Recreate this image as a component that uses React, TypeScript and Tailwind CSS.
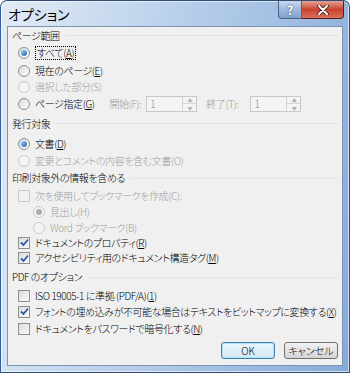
import type { ReactNode } from 'react'

const FONT = "font-['Noto_Sans_CJK_JP','Noto_Sans',sans-serif] [font-feature-settings:'palt']"

// Windows 7 style option dialog (Word "PDF options")
function Key({ k }: { k: string }) {
  return <>(<span className="underline underline-offset-1">{k}</span>)</>
}

function Radio({ checked, disabled }: { checked?: boolean; disabled?: boolean }) {
  return (
    <span
      className={`relative flex h-[12px] w-[12px] shrink-0 items-center justify-center rounded-full border ${
        disabled ? 'border-[#c9cbcc] bg-[#f4f4f4]' : 'border-[#8b9095] bg-gradient-to-br from-[#d6d9dc] to-[#ffffff]'
      }`}
    >
      {checked && (
        <span
          className={`h-[6px] w-[6px] rounded-full ${
            disabled ? 'bg-[#a9aeb3]' : 'bg-gradient-to-br from-[#9fd0f7] to-[#1a5fb4]'
          }`}
        />
      )}
    </span>
  )
}

function Check({ checked, disabled }: { checked?: boolean; disabled?: boolean }) {
  return (
    <span
      className={`flex h-[12px] w-[12px] shrink-0 items-center justify-center border ${
        disabled ? 'border-[#cbcbcb] bg-[#f2f2f2]' : 'border-[#8e8f8f] bg-gradient-to-br from-[#dcdcdc] to-[#fafafa]'
      }`}
    >
      {checked && (
        <svg width="9" height="9" viewBox="0 0 9 9">
          <path d="M1 4.5 L3.5 7 L8 1.5" fill="none" stroke="#2c5aa9" strokeWidth="1.8" />
        </svg>
      )}
    </span>
  )
}

function Header({ children, h }: { children: ReactNode; h: string }) {
  return (
    <div className={`flex items-center pl-[4px] pr-[3px] ${h}`}>
      <span className="whitespace-nowrap text-black">{children}</span>
      <span className="ml-[6px] h-px flex-1 bg-[#dde3e9]" />
    </div>
  )
}

function Row({
  children,
  h,
  indent = 'pl-[10px]',
  disabled,
}: {
  children: ReactNode
  h: string
  indent?: string
  disabled?: boolean
}) {
  return (
    <div
      className={`flex items-center gap-[5px] whitespace-nowrap ${h} ${indent} ${
        disabled ? 'text-[#a0a0a0]' : 'text-black'
      }`}
    >
      {children}
    </div>
  )
}

function Spin({ ml }: { ml: string }) {
  return (
    <div className={`flex h-[16px] w-[51px] shrink-0 items-center border border-[#c6c8ca] bg-[#f4f4f4] text-[#8a8a8a] ${ml}`}>
      <span className="flex-1 pl-[3px] leading-none">1</span>
      <div className="flex h-full w-[14px] flex-col border-l border-[#d4d4d4]">
        <span className="flex flex-1 items-center justify-center text-[5px] leading-none text-[#b0b0b0]">▲</span>
        <span className="flex flex-1 items-center justify-center border-t border-[#d4d4d4] text-[5px] leading-none text-[#b0b0b0]">▼</span>
      </div>
    </div>
  )
}

export default function App() {
  return (
    <div className={`h-[373px] w-[350px] bg-white ${FONT}`}>
      <div className="flex h-full w-full flex-col rounded-t-[7px] border border-[#2f4c74] border-l-[#345f9c] bg-[linear-gradient(100deg,#e2ebf5_0%,#bcd2ec_40%,#86aad8_100%)] shadow-[inset_0_0_0_1px_rgba(255,255,255,0.6)]">
        <div className="flex h-[25px] shrink-0 items-start">
          <span className="pl-[7px] pt-[4px] text-[14px] leading-[18px] text-black">オプション</span>
          <div className="ml-auto mr-[5px] flex">
            <div className="flex h-[18px] w-[24px] items-center justify-center rounded-bl-[4px] border border-t-0 border-[#4c6484] bg-gradient-to-b from-[#c9d9ee] via-[#9db8dc] to-[#7fa1cf] text-[12px] font-bold leading-none text-white [text-shadow:0_0_2px_#1d3557]">
              ?
            </div>
            <div className="flex h-[18px] w-[42px] items-center justify-center rounded-br-[4px] border border-l-0 border-t-0 border-[#5a1f1a] bg-gradient-to-b from-[#e3a292] via-[#c8432f] to-[#d9705c]">
              <svg width="12" height="10" viewBox="0 0 12 10">
                <path d="M2 1 L10 9 M10 1 L2 9" stroke="#3a1a14" strokeWidth="3.6" strokeLinecap="round" />
                <path d="M2 1 L10 9 M10 1 L2 9" stroke="#ffffff" strokeWidth="2" strokeLinecap="round" />
              </svg>
            </div>
          </div>
        </div>
        <div className="mx-[6px] mb-[6px] flex flex-1 flex-col border border-[#7d94b4] bg-[#f0f0f0] text-[10px] font-light leading-none tracking-[-0.4px]">
          <Header h="h-[17px]">ページ範囲</Header>
          <Row h="h-[18px]">
            <Radio checked />
            <span className="border border-dotted border-black px-px py-px">
              すべて<Key k="A" />
            </span>
          </Row>
          <Row h="h-[17px]">
            <Radio />
            <span>
              現在のページ<Key k="E" />
            </span>
          </Row>
          <Row h="h-[16px]" disabled>
            <Radio disabled />
            <span>選択した部分(S)</span>
          </Row>
          <Row h="h-[17px]">
            <Radio />
            <span>
              ページ指定<Key k="G" />
            </span>
            <span className="ml-[10px] text-[#9a9a9a]">開始(F):</span>
            <Spin ml="ml-0" />
            <span className="ml-[4px] text-[#9a9a9a]">終了(T):</span>
            <Spin ml="ml-[7px]" />
          </Row>
          <Header h="h-[23px]">発行対象</Header>
          <Row h="h-[17px]">
            <Radio checked />
            <span>
              文書<Key k="D" />
            </span>
          </Row>
          <Row h="h-[17px]" disabled>
            <Radio disabled />
            <span>変更とコメントの内容を含む文書(O)</span>
          </Row>
          <Header h="h-[18px]">印刷対象外の情報を含める</Header>
          <Row h="h-[17px]" disabled>
            <Check disabled />
            <span>次を使用してブックマークを作成(C):</span>
          </Row>
          <Row h="h-[16px]" indent="pl-[25px]" disabled>
            <Radio checked disabled />
            <span>見出し(H)</span>
          </Row>
          <Row h="h-[15px]" indent="pl-[25px]" disabled>
            <Radio disabled />
            <span>Word ブックマーク(B)</span>
          </Row>
          <Row h="h-[15px]">
            <Check checked />
            <span>
              ドキュメントのプロパティ<Key k="R" />
            </span>
          </Row>
          <Row h="h-[16px]">
            <Check checked />
            <span>
              アクセシビリティ用のドキュメント構造タグ<Key k="M" />
            </span>
          </Row>
          <Header h="h-[22px]">PDF のオプション</Header>
          <Row h="h-[15px]">
            <Check />
            <span>
              ISO 19005-1 に準拠 (PDF/A)<Key k="1" />
            </span>
          </Row>
          <Row h="h-[17px]">
            <Check checked />
            <span>
              フォントの埋め込みが不可能な場合はテキストをビットマップに変換する<Key k="X" />
            </span>
          </Row>
          <Row h="h-[17px]">
            <Check />
            <span>
              ドキュメントをパスワードで暗号化する<Key k="N" />
            </span>
          </Row>
          <div className="mt-[5px] flex justify-end pr-[4px] tracking-normal">
            <button className="mr-[9px] flex h-[17px] w-[54px] shrink-0 items-center justify-center rounded-[3px] border border-[#3c7fb1] bg-gradient-to-b from-[#eaf6fd] to-[#d3e8f5] text-black shadow-[inset_0_0_0_1px_#b6e2f8]">
              OK
            </button>
            <button className="flex h-[17px] w-[54px] shrink-0 items-center justify-center rounded-[3px] border border-[#707070] bg-gradient-to-b from-[#f2f2f2] to-[#d5d5d5] text-black">
              キャンセル
            </button>
          </div>
        </div>
      </div>
    </div>
  )
}
